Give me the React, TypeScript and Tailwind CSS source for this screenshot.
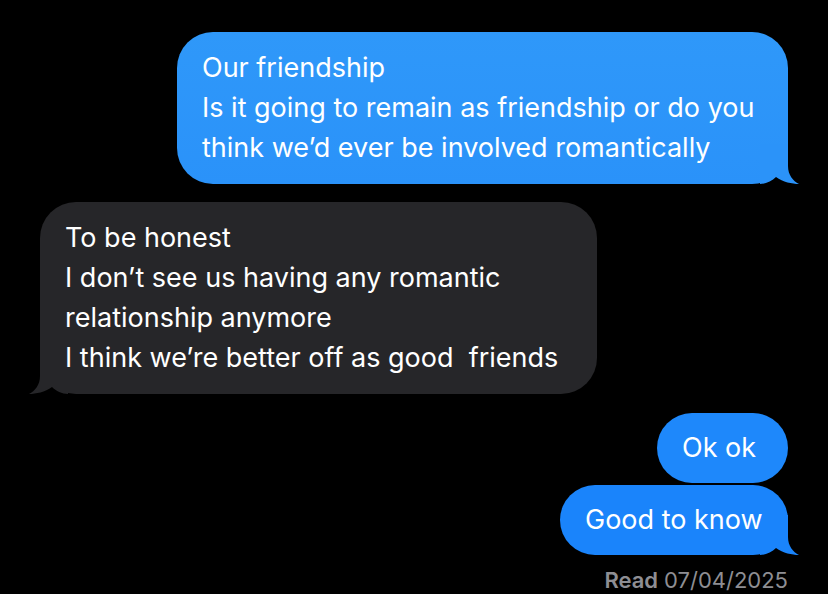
const font = { fontFamily: "Inter, 'Noto Sans', sans-serif" };

const Tail = ({ side, color }: { side: "left" | "right"; color: string }) => (
  <svg
    width="40"
    height="40"
    viewBox="0 0 40 40"
    className={
      side === "right"
        ? "absolute bottom-0 -right-[12px]"
        : "absolute bottom-0 -left-[12px] -scale-x-100"
    }
  >
    <path
      d="M0 0 L28 0 L28 22 C28 31 33 37 39 40 C32 40 23 38 16 33 C12 37 6 40 0 40 Z"
      fill={color}
    />
  </svg>
);

const Bubble = ({
  lines,
  side,
  color,
  bg,
  width,
  tail,
}: {
  lines: string[];
  side: "left" | "right";
  color: string;
  bg: string;
  width: string;
  tail?: boolean;
}) => (
  <div className={`relative ${width} ${bg} rounded-[36px] px-[25px] py-[15px]`}>
    {tail && <Tail side={side} color={color} />}
    <div className="relative text-white text-[27px] leading-[40px] whitespace-pre">
      {lines.map((l) => (
        <div key={l}>{l}</div>
      ))}
    </div>
  </div>
);

export default function App() {
  return (
    <div className="w-[828px] h-[594px] bg-black flex flex-col overflow-hidden" style={font}>
      <div className="flex justify-end pr-[40px] pt-[32px]">
        <Bubble
          side="right"
          tail
          color="#2b93f9"
          width="w-[611px] py-[16px]"
          bg="bg-gradient-to-b from-[#2f98f9] to-[#2a92f9]"
          lines={[
            "Our friendship",
            "Is it going to remain as friendship or do you",
            "think we\u2019d ever be involved romantically",
          ]}
        />
      </div>
      <div className="flex justify-start pl-[40px] mt-[18px]">
        <Bubble
          side="left"
          tail
          color="#262629"
          width="w-[557px] py-[16px]"
          bg="bg-[#262629]"
          lines={[
            "To be honest",
            "I don\u2019t see us having any romantic",
            "relationship anymore",
            "I think we\u2019re better off as good  friends",
          ]}
        />
      </div>
      <div className="flex flex-col items-end pr-[40px] mt-[19px] gap-[2px]">
        <Bubble
          side="right"
          color="#1e88fb"
          width="w-[131px]"
          bg="bg-[#1e88fb]"
          lines={["Ok ok"]}
        />
        <Bubble
          side="right"
          tail
          color="#1a84fb"
          width="w-[228px]"
          bg="bg-[#1a84fb]"
          lines={["Good to know"]}
        />
      </div>
      <div className="flex justify-end pr-[40px] mt-[12px] text-[22px] leading-[26px] text-[#8e8e93]">
        <span className="font-semibold">Read</span>
        <span className="ml-[6px]">07/04/2025</span>
      </div>
    </div>
  );
}
